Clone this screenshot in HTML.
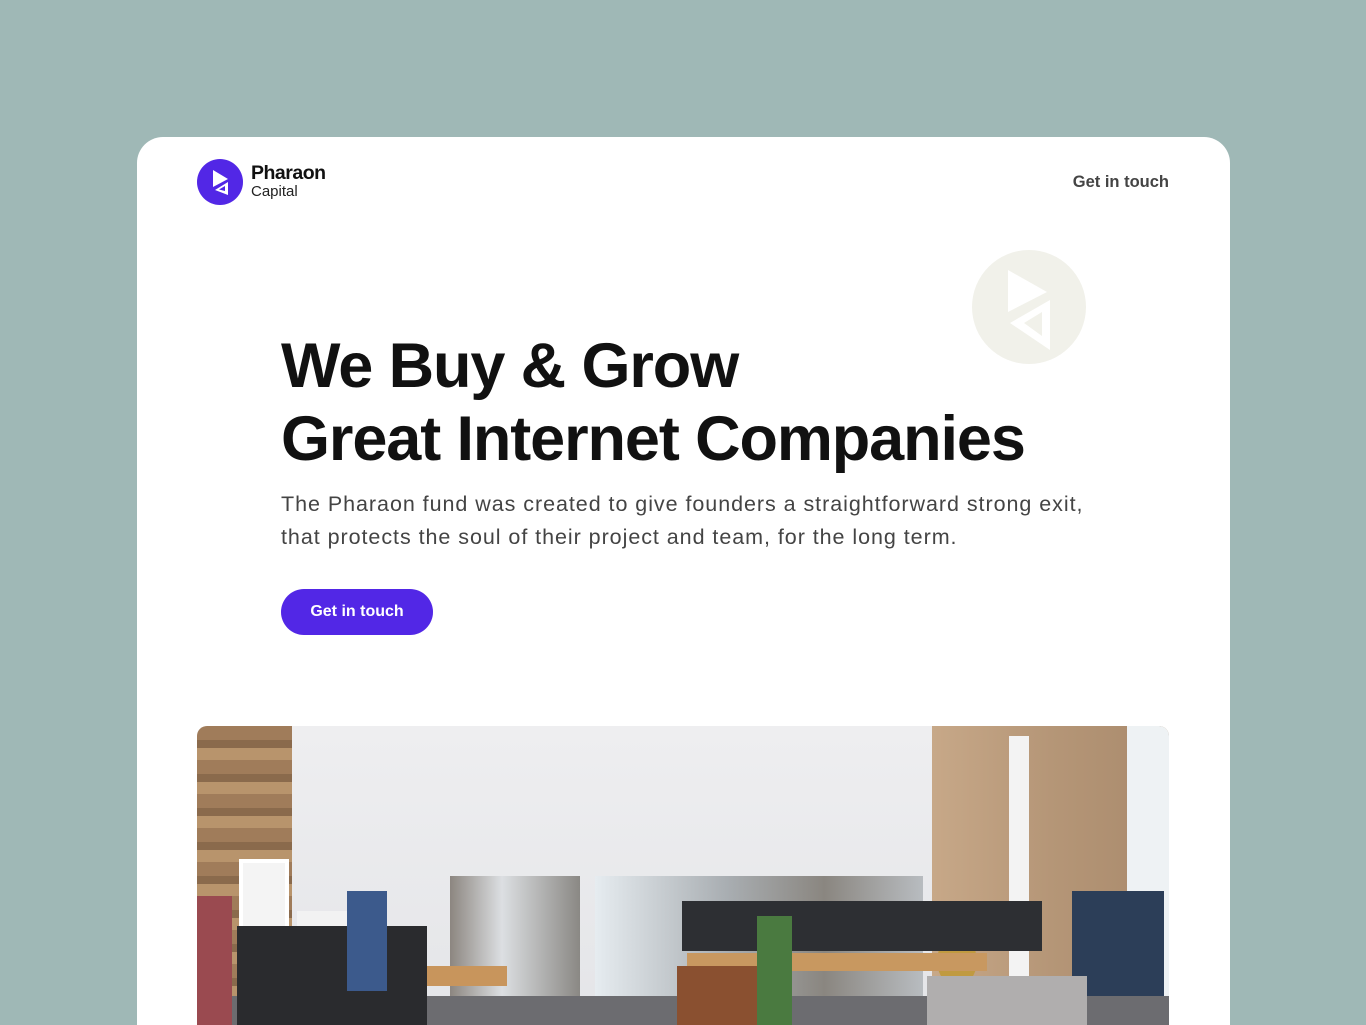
<!DOCTYPE html>
<html><head><meta charset="utf-8">
<style>
*{margin:0;padding:0;box-sizing:border-box}
html,body{width:1366px;height:1025px;overflow:hidden;background:#9fb8b6;font-family:"Liberation Sans",sans-serif}
.card{position:absolute;left:137px;top:137px;width:1093px;height:888px;background:#fff;border-radius:26px 26px 0 0;overflow:hidden}
.logo{position:absolute;left:60px;top:22px;display:flex;align-items:center}
.logo .t1{font-weight:bold;font-size:19.5px;color:#111;letter-spacing:-0.5px;line-height:20px}
.logo .t2{font-size:15px;color:#222;line-height:18px}
.nav{position:absolute;right:61px;top:36px;font-size:16.5px;color:#444;font-weight:bold}
h1{position:absolute;left:144px;top:193px;font-size:63px;line-height:73px;font-weight:bold;color:#111;letter-spacing:-1.1px}
p.lead{position:absolute;left:144px;top:351px;font-size:21.5px;line-height:33px;color:#444;white-space:nowrap;letter-spacing:0.95px}
.btn{position:absolute;left:144px;top:452px;width:152px;height:46px;border-radius:23px;background:#5227e6;color:#fff;font-size:16px;font-weight:bold;text-align:center;line-height:46px}
.photo{position:absolute;left:60px;top:589px;width:972px;height:299px;border-radius:10px 10px 0 0;overflow:hidden;background:#e9eaec}
.photo div{position:absolute}
</style></head><body>
<div class="card">
  <div class="logo">
    <svg width="46" height="46" viewBox="0 0 46 46"><circle cx="23" cy="23" r="23" fill="#5227e6"/>
      <path d="M16 11 L31 20 L16 28 Z" fill="#fff"/>
      <path d="M31 23 L31 36 L18 31 Z M28 27 L28 32 L22 30.5 Z" fill="#fff" fill-rule="evenodd"/></svg>
    <div style="margin-left:8px"><div class="t1">Pharaon</div><div class="t2">Capital</div></div>
  </div>
  <div class="nav">Get in touch</div>
  <svg style="position:absolute;left:835px;top:113px" width="114" height="114" viewBox="0 0 114 114">
    <circle cx="57" cy="57" r="57" fill="#f1f1ea"/>
    <path d="M36 20 L75 42 L36 62 Z" fill="#fff"/>
    <path d="M78 50 L78 100 L38 73 Z M70 62 L70 86 L52 73 Z" fill="#fff" fill-rule="evenodd"/>
  </svg>
  <h1>We Buy &amp; Grow<br>Great Internet Companies</h1>
  <p class="lead">The Pharaon fund was created to give founders a straightforward strong exit,<br>that protects the soul of their project and team, for the long term.</p>
  <div class="btn">Get in touch</div>
  <div class="photo">
    <div style="left:95px;top:0;width:640px;height:299px;background:linear-gradient(#eeeef0,#e4e5e8)"></div>
    <div style="left:0;top:0;width:95px;height:299px;background:repeating-linear-gradient(#a07c5a 0 14px,#8a6a4c 14px 22px,#b8946c 22px 34px)"></div>
    <div style="left:42px;top:133px;width:50px;height:166px;background:#f4f4f4;border:4px solid #fff"></div>
    <div style="left:100px;top:185px;width:90px;height:114px;background:#f2f2f2"></div>
    <div style="left:253px;top:150px;width:130px;height:149px;background:linear-gradient(90deg,#8c8680,#dcdfe2 40%,#8a8884)"></div>
    <div style="left:398px;top:150px;width:328px;height:149px;background:linear-gradient(90deg,#e6ecf0,#a9aeb2 40%,#8a8680 70%,#b8bcc0)"></div>
    <div style="left:735px;top:0;width:237px;height:299px;background:linear-gradient(90deg,#c7a888,#b59677 50%,#a98a6c)"></div>
    <div style="left:812px;top:10px;width:20px;height:289px;background:#f3f3f3"></div>
    <div style="left:930px;top:0;width:42px;height:299px;background:#eef2f4"></div>
    <div style="left:875px;top:165px;width:92px;height:134px;background:#2c3e58"></div>
    <div style="left:740px;top:210px;width:40px;height:50px;border-radius:50%;background:#c09a40"></div>
    <div style="left:0;top:270px;width:972px;height:29px;background:#6c6c70"></div>
    <div style="left:160px;top:240px;width:150px;height:20px;background:#c8955c"></div>
    <div style="left:490px;top:227px;width:300px;height:18px;background:#c89860"></div>
    <div style="left:485px;top:175px;width:360px;height:50px;background:#2d2f33"></div>
    <div style="left:0;top:170px;width:35px;height:129px;background:#9a4a50"></div>
    <div style="left:40px;top:200px;width:190px;height:99px;background:#2a2b2e"></div>
    <div style="left:150px;top:165px;width:40px;height:100px;background:#3c5a8c"></div>
    <div style="left:480px;top:240px;width:80px;height:59px;background:#8a5030"></div>
    <div style="left:560px;top:190px;width:35px;height:109px;background:#4a7a40"></div>
    <div style="left:730px;top:250px;width:160px;height:49px;background:#b0aeae"></div>
  </div>
</div>
</body></html>
